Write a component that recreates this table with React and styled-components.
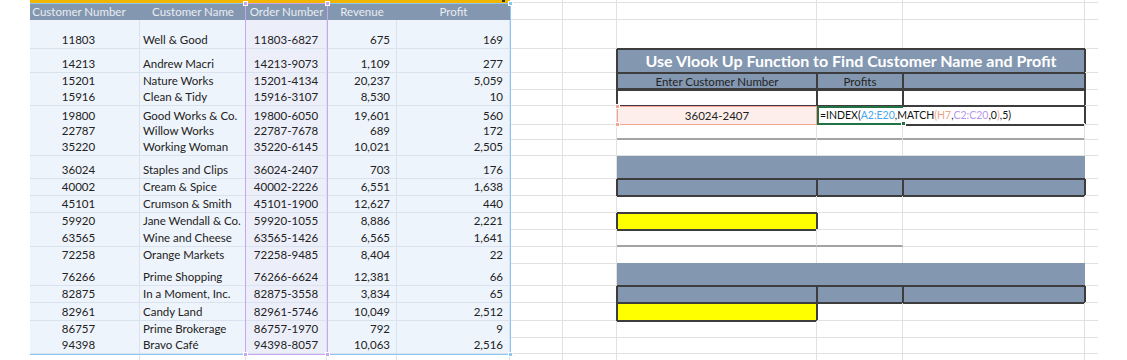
import React from "react";
import styled, { createGlobalStyle } from "styled-components";

const GlobalStyle = createGlobalStyle`
  *, *::before, *::after { box-sizing: border-box; }
  html, body { margin: 0; padding: 0; background: #ffffff; }
  body {
    font-family: Lato, "Liberation Sans", sans-serif;
    overflow: hidden;
  }
`;

// column widths of the visible sheet, left margin to right margin
const TEMPLATE =
  "30px 110px 106px 81px 70px 113px 53px 54px 200px 86px 182px 13px 1fr";

const SLATE = "#8497b0";
const DARK = "#3d3d3d";
const GRIDLINE = "#e1e1e1";

const edge = (sides, c = DARK) =>
  sides
    .split("")
    .map(
      (s) =>
        ({
          t: `inset 0 1px 0 ${c}, 0 -1px 0 ${c}`,
          r: `inset -1px 0 0 ${c}, 1px 0 0 ${c}`,
          b: `inset 0 -1px 0 ${c}, 0 1px 0 ${c}`,
          l: `inset 1px 0 0 ${c}, -1px 0 0 ${c}`,
        }[s])
    )
    .join(", ");

const Sheet = styled.div`
  position: relative;
  width: 1127px;
  height: 360px;
  overflow: hidden;
  font-size: 11.5px;
  color: #222222;
`;

const Row = styled.div`
  display: grid;
  grid-template-columns: ${TEMPLATE};
  height: ${(p) => p.$h}px;
`;

const Margin = styled.div``;

const Gap = styled.div`
  border-right: ${(p) => (p.$last ? "none" : `1px solid ${GRIDLINE}`)};
  border-bottom: ${(p) =>
    p.$rule ? "2px solid #a3a3a3" : `1px solid ${GRIDLINE}`};
`;

const Strip = styled.div`
  grid-column: span 5;
  background: #f2b500;
  position: relative;
`;

const FilterMark = styled.span`
  position: absolute;
  right: 5px;
  top: 0;
  width: 3px;
  height: 2px;
  background: #333;
`;

const HeadCell = styled.div`
  display: flex;
  align-items: center;
  justify-content: center;
  padding-right: ${(p) => p.$pr || 0}px;
  background: ${SLATE};
  color: #e8edf3;
  white-space: nowrap;
  line-height: 15px;
`;

const TCell = styled.div`
  display: flex;
  align-items: flex-end;
  justify-content: ${(p) => p.$align};
  padding: 0 ${(p) => p.$pr || 0}px 1px ${(p) => p.$pl || 0}px;
  background: ${(p) => (p.$tint ? "#eceff9" : "#eef4fb")};
  border-bottom: 1px solid #d9e2ed;
  border-right: 1px solid #d9e2ed;
  white-space: nowrap;
  line-height: 15px;
`;

const Title = styled.div`
  grid-column: span 3;
  display: flex;
  align-items: center;
  justify-content: center;
  background: ${SLATE};
  color: #ffffff;
  font-weight: 700;
  font-size: 16px;
  white-space: nowrap;
  box-shadow: ${edge("trbl")};
`;

const Band = styled.div`
  grid-column: span 3;
  background: ${SLATE};
`;

const Box = styled.div`
  display: flex;
  align-items: center;
  justify-content: center;
  background: ${(p) => p.$fill || "transparent"};
  color: #1f1f1f;
  white-space: nowrap;
  box-shadow: ${(p) => edge(p.$sides || "trbl")};
`;

const Input = styled.div`
  position: relative;
  display: flex;
  align-items: flex-end;
  justify-content: center;
  padding-bottom: 1px;
  background: #fdeeeb;
  border: 1.5px solid #f3a392;
  color: #1f1f1f;
  line-height: 14px;
`;

const Formula = styled.div`
  position: relative;
  z-index: 1;
  display: flex;
  align-items: flex-end;
  padding: 0 0 1px 1px;
  border: 2px solid #217346;
  border-right: none;
  color: #111;
  font-size: 10.5px;
  white-space: nowrap;
  overflow: visible;
  line-height: 14px;
`;

const Ref = styled.span`
  color: ${(p) => p.$c};
`;

const Handle = styled.span`
  position: absolute;
  width: 5px;
  height: 5px;
  background: ${(p) => p.$c};
  border: 1px solid #fff;
  ${(p) => (p.$top ? "top: -3px;" : "bottom: -3px;")}
  ${(p) => (p.$left ? "left: -3px;" : "right: -3px;")}
`;

const Frame = styled.div`
  position: absolute;
  pointer-events: none;
  border: 1.5px solid ${(p) => p.$c};
  ${(p) => p.$noLeft && "border-left: none;"}
`;

const Frames = styled.div`
  position: absolute;
  inset: 0;
  pointer-events: none;
`;

const TABLE = [
  ["11803", "Well & Good", "11803-6827", "675", "169"],
  ["14213", "Andrew Macri", "14213-9073", "1,109", "277"],
  ["15201", "Nature Works", "15201-4134", "20,237", "5,059"],
  ["15916", "Clean & Tidy", "15916-3107", "8,530", "10"],
  ["19800", "Good Works & Co.", "19800-6050", "19,601", "560"],
  ["22787", "Willow Works", "22787-7678", "689", "172"],
  ["35220", "Working Woman", "35220-6145", "10,021", "2,505"],
  ["36024", "Staples and Clips", "36024-2407", "703", "176"],
  ["40002", "Cream & Spice", "40002-2226", "6,551", "1,638"],
  ["45101", "Crumson & Smith", "45101-1900", "12,627", "440"],
  ["59920", "Jane Wendall & Co.", "59920-1055", "8,886", "2,221"],
  ["63565", "Wine and Cheese", "63565-1426", "6,565", "1,641"],
  ["72258", "Orange Markets", "72258-9485", "8,404", "22"],
  ["76266", "Prime Shopping", "76266-6624", "12,381", "66"],
  ["82875", "In a Moment, Inc.", "82875-3558", "3,834", "65"],
  ["82961", "Candy Land", "82961-5746", "10,049", "2,512"],
  ["86757", "Prime Brokerage", "86757-1970", "792", "9"],
  ["94398", "Bravo Café", "94398-8057", "10,063", "2,516"],
];

const HEIGHTS = [
  29.3, 23.4, 16.6, 16.7, 16.7, 16.6, 16.7, 23.3, 16.7, 16.7, 16.6, 17.4, 16.6,
  22.7, 17.3, 17.4, 16.3, 17,
];

const PANEL = [
  "", "title", "head", "box", "input", "ruleWide", "", "band", "headEmpty", "",
  "yellow", "ruleShort", "", "band", "headEmpty", "yellow", "", "",
];

function PanelCells({ kind }) {
  switch (kind) {
    case "title":
      return <Title>Use Vlook Up Function to Find Customer Name and Profit</Title>;
    case "head":
      return (
        <>
          <Box $fill={SLATE}>Enter Customer Number</Box>
          <Box $fill={SLATE}>Profits</Box>
          <Box $fill={SLATE} />
        </>
      );
    case "headEmpty":
      return (
        <>
          <Box $fill={SLATE} />
          <Box $fill={SLATE} />
          <Box $fill={SLATE} />
        </>
      );
    case "box":
      return (
        <>
          <Box />
          <Box />
          <Box />
        </>
      );
    case "input":
      return (
        <>
          <Input>
            36024-2407
            <Handle $c="#f3a392" $top $left />
            <Handle $c="#f3a392" $left />
          </Input>
          <Formula>
            =INDEX(<Ref $c="#4aa6ea">A2:E20</Ref>,MATCH<Ref $c="#f2a28a">(H7</Ref>,
            <Ref $c="#b497ee">C2:C20</Ref>,0<Ref $c="#f2a28a">)</Ref>,5)
            <Handle $c="#217346" />
          </Formula>
          <Box $sides="trb" />
        </>
      );
    case "ruleWide":
      return (
        <>
          <Gap $rule />
          <Gap $rule />
          <Gap $rule />
        </>
      );
    case "ruleShort":
      return (
        <>
          <Gap $rule />
          <Gap $rule />
          <Gap />
        </>
      );
    case "band":
      return <Band />;
    case "yellow":
      return (
        <>
          <Box $fill="#ffff00" />
          <Gap />
          <Gap />
        </>
      );
    default:
      return (
        <>
          <Gap />
          <Gap />
          <Gap />
        </>
      );
  }
}

function TailCells() {
  return (
    <>
      <Gap />
      <Gap />
    </>
  );
}

export default function App() {
  return (
    <>
      <GlobalStyle />
      <Sheet>
        <Row $h={3.3}>
          <Margin />
          <Strip>
            <FilterMark />
          </Strip>
          <TailCells />
          <PanelCells />
          <Gap $last />
          <Margin />
        </Row>
        <Row $h={16.7}>
          <Margin />
          <HeadCell $pr={12}>Customer Number</HeadCell>
          <HeadCell>Customer Name</HeadCell>
          <HeadCell>Order Number</HeadCell>
          <HeadCell>Revenue</HeadCell>
          <HeadCell>Profit</HeadCell>
          <TailCells />
          <PanelCells />
          <Gap $last />
          <Margin />
        </Row>
        {TABLE.map((r, i) => (
          <Row key={r[2]} $h={HEIGHTS[i]}>
            <Margin />
            <TCell $align="center" $pr={12}>{r[0]}</TCell>
            <TCell $align="flex-start" $pl={3}>{r[1]}</TCell>
            <TCell $align="center" $tint>{r[2]}</TCell>
            <TCell $align="flex-end" $pr={6}>{r[3]}</TCell>
            <TCell $align="flex-end" $pr={6}>{r[4]}</TCell>
            <TailCells />
            <PanelCells kind={PANEL[i]} />
            <Gap $last />
            <Margin />
          </Row>
        ))}
        <Row $h={10}>
          <Margin />
          <Gap />
          <Gap />
          <Gap />
          <Gap />
          <Gap />
          <TailCells />
          <PanelCells />
          <Gap $last />
          <Margin />
        </Row>
        <Frames>
          <Frame
            $c="#8cc6f2"
            $noLeft
            style={{ left: 30, top: 2.6, width: 481, height: 352.2 }}
          >
            <Handle $c="#8cc6f2" $top />
            <Handle $c="#8cc6f2" />
          </Frame>
          <Frame $c="#c8a6f2" style={{ left: 245.3, top: 2.6, width: 82.4, height: 352.2 }}>
            <Handle $c="#c8a6f2" $top $left />
            <Handle $c="#c8a6f2" $top />
            <Handle $c="#c8a6f2" $left />
            <Handle $c="#c8a6f2" />
          </Frame>
        </Frames>
      </Sheet>
    </>
  );
}
